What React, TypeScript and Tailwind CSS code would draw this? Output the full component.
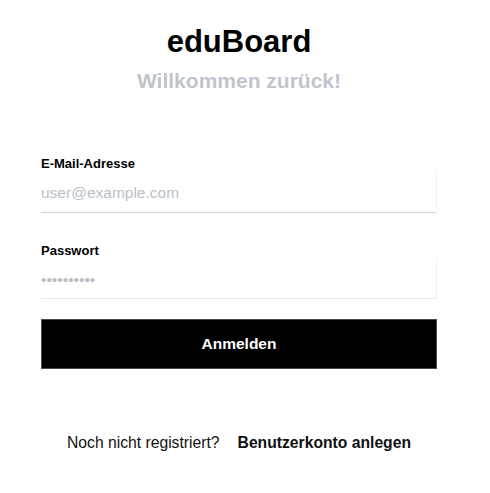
import { useState } from 'react';

const font = { fontFamily: '"Liberation Sans", Arial, sans-serif' };

export default function App() {
  const [email, setEmail] = useState('');
  const [password, setPassword] = useState('');

  return (
    <div className="min-h-screen bg-white text-black" style={font}>
      <div className="pl-[41px] pr-[53px] pt-[25px]">
        {/* Header */}
        <h1 className="text-center text-[31px] leading-[34px] font-bold">eduBoard</h1>
        <p className="mt-[10px] text-center text-[21px] leading-[24px] font-bold text-[#bfc5cd]">
          Willkommen zurück!
        </p>

        {/* Form */}
        <form className="mt-[64px] flex flex-col" onSubmit={(e) => e.preventDefault()}>
          <label className="text-[13px] leading-[13px] font-bold">E-Mail-Adresse</label>
          <input
            type="email"
            value={email}
            onChange={(e) => setEmail(e.target.value)}
            placeholder="user@example.com"
            className="w-full bg-white pt-[14px] pb-[10px] text-[15.5px] leading-[18px] outline-none border-b border-r border-b-[#cfd3d8] border-r-[#f0f1f3] placeholder:text-[#b9bfc7]"
          />

          <label className="mt-[31px] text-[13px] leading-[13px] font-bold">Passwort</label>
          <input
            type="password"
            value={password}
            onChange={(e) => setPassword(e.target.value)}
            placeholder="••••••••••"
            className="w-full bg-white pt-[14px] pb-[9px] text-[15.5px] leading-[18px] outline-none border-b border-r border-b-[#e6e8eb] border-r-[#f0f1f3] placeholder:text-[#b9bfc7]"
          />

          <button
            type="submit"
            className="mt-[20px] h-[50px] w-full bg-black border border-[#4a4a4a] text-white text-[15.5px] font-bold"
          >
            Anmelden
          </button>
        </form>

        {/* Footer */}
        <div className="mt-[64px] flex items-center justify-center gap-[18px] text-[15.7px] leading-[20px] text-[#111]">
          <span>Noch nicht registriert?</span>
          <a href="#" className="font-bold">Benutzerkonto anlegen</a>
        </div>
      </div>
    </div>
  );
}
